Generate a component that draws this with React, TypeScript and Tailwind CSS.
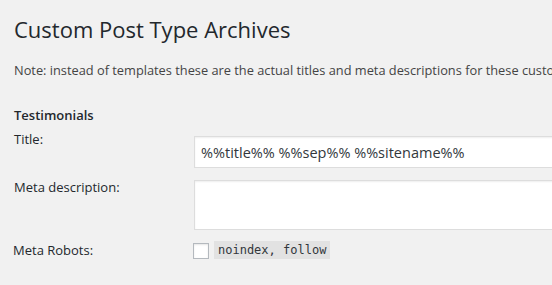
const SANS = "font-['Open_Sans','Noto_Sans',sans-serif]";

export default function App() {
  return (
    <div className={`w-[552px] h-[285px] overflow-hidden bg-[#f1f1f1] text-[#444] ${SANS}`}>
      <div className="pl-[14px] pt-[15px] w-[760px]">
        <h2 className="text-[22px] leading-[29px] text-[#23282d] font-normal">Custom Post Type Archives</h2>
        <p className="mt-[17px] text-[12.8px] leading-[19.5px] whitespace-nowrap">
          Note: instead of templates these are the actual titles and meta descriptions for these custom post type archive pages.
        </p>

        <h3 className="mt-[25.5px] text-[13px] leading-[19.5px] font-semibold text-[#23282d]">Testimonials</h3>

        {/* Title */}
        <div className="mt-[4.5px] flex items-start">
          <label className="w-[180px] shrink-0 text-[13px] leading-[19.5px] text-[#23282d]">Title:</label>
          <input
            readOnly
            value="%%title%% %%sep%% %%sitename%%"
            className="mt-[6px] h-[32px] w-[500px] bg-white border border-[#ddd] shadow-[inset_0_1px_2px_rgba(0,0,0,0.07)] px-[6px] text-[14.5px] text-[#32373c] outline-none"
          />
        </div>

        {/* Meta description */}
        <div className="mt-[10px] flex items-start">
          <label className="w-[180px] shrink-0 text-[13px] leading-[19.5px] text-[#23282d]">Meta description:</label>
          <textarea
            readOnly
            className="mt-[2px] h-[50px] w-[500px] resize-none bg-white border border-[#ddd] shadow-[inset_0_1px_2px_rgba(0,0,0,0.07)] outline-none"
          />
        </div>

        {/* Meta Robots */}
        <div className="mt-[11px] -ml-px flex items-start">
          <label className="w-[180px] shrink-0 text-[13px] leading-[19.5px] text-[#23282d]">Meta Robots:</label>
          <span className="mt-[2px] w-[16px] h-[16px] bg-white border border-[#b4b9be] shadow-[inset_0_1px_2px_rgba(0,0,0,0.1)]" />
          <code className="ml-[5px] h-[18px] px-[4px] bg-[#e2e2e2] text-[#32373c] text-[12px] leading-[18px] font-['DejaVu_Sans_Mono',monospace]">
            noindex, follow
          </code>
        </div>
      </div>
    </div>
  );
}
